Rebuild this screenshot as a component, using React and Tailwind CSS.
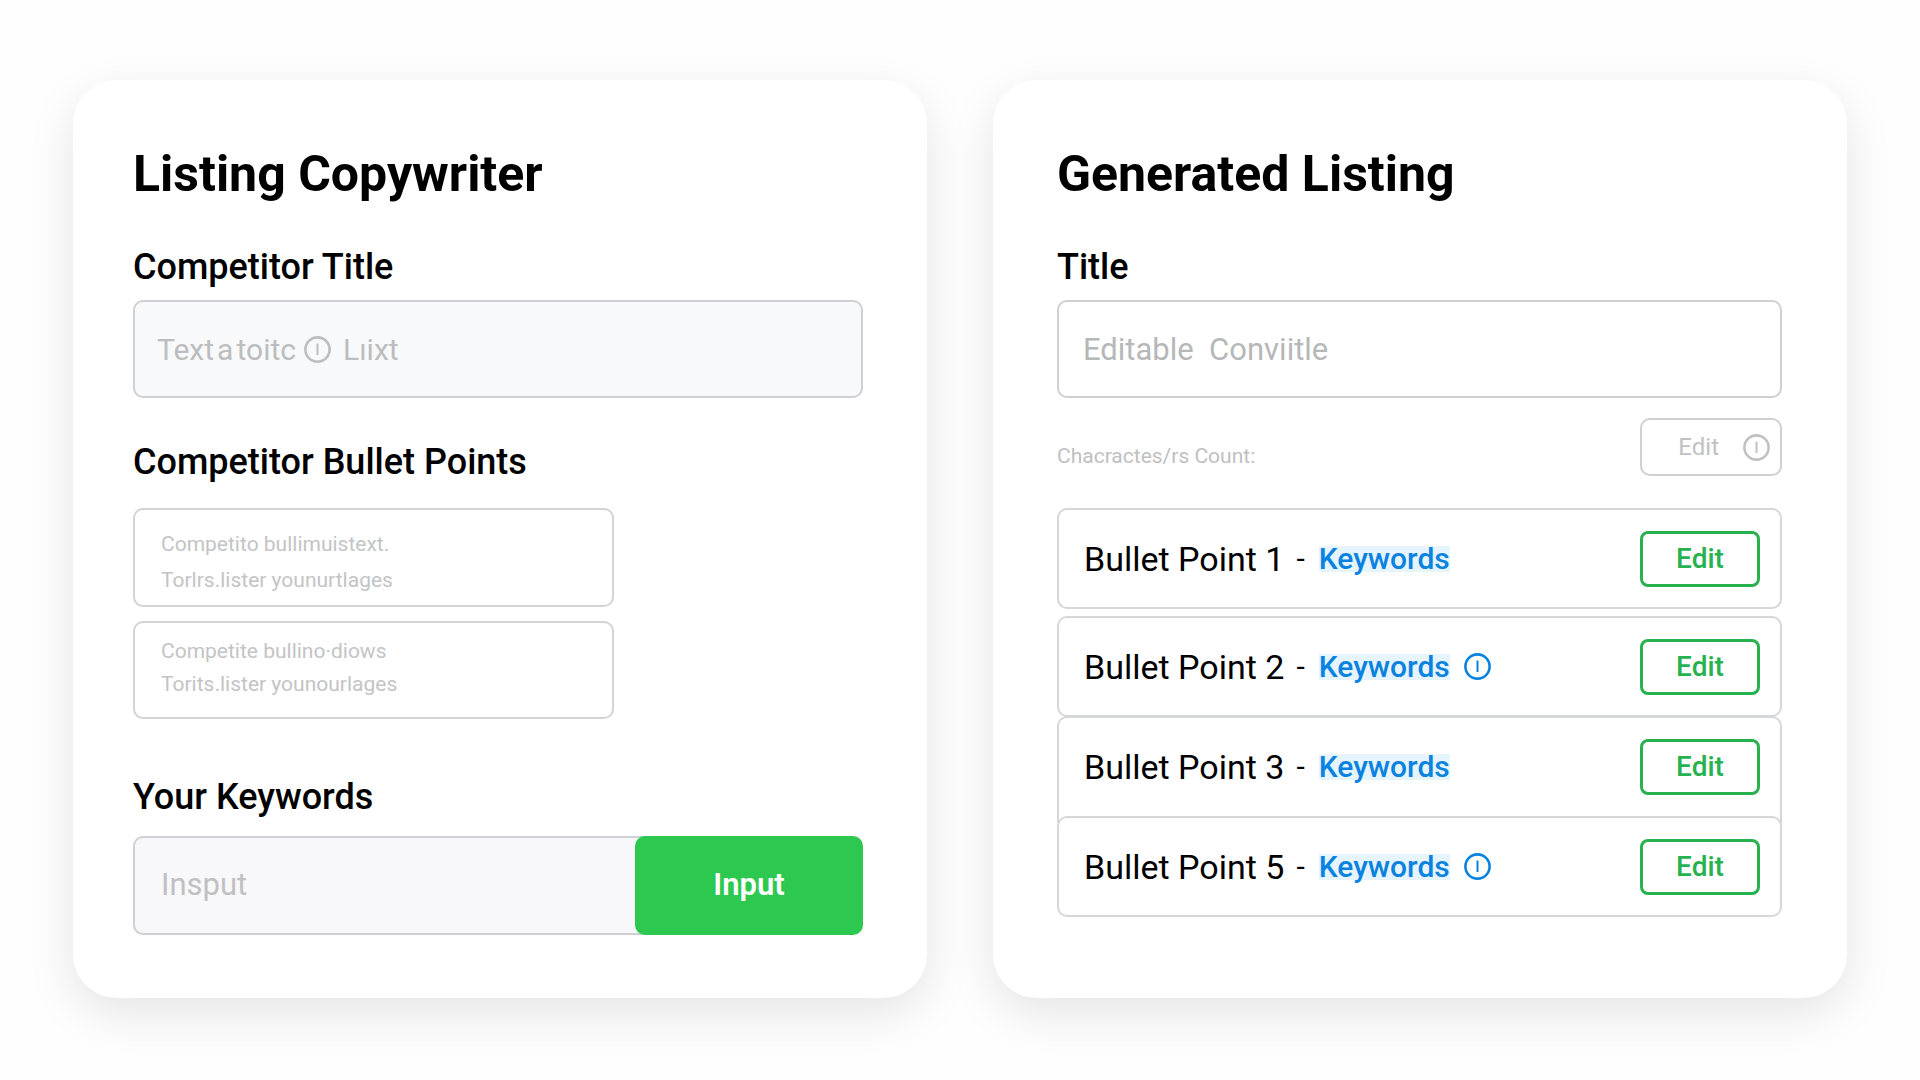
import React, { useState } from "react";

const bullets = [
  { id: 1, label: "Bullet Point 1", info: false, box: "h-[101px] rounded-[10px]" },
  { id: 2, label: "Bullet Point 2", info: true, box: "mt-[7px] h-[101px] rounded-[10px]" },
  // runs on underneath the last row, so it has no bottom edge
  { id: 3, label: "Bullet Point 3", info: false, box: "-mt-px h-[107px] rounded-t-[10px] border-b-0 pb-2" },
  { id: 5, label: "Bullet Point 5", info: true, box: "-mt-[7px] h-[101px] rounded-[10px]" },
];

const InfoIcon = ({ className }) => (
  <svg viewBox="0 0 27 27" fill="none" stroke="currentColor" className={className} aria-hidden="true">
    <circle cx="13.5" cy="13.5" r="12.1" strokeWidth="2.6" />
    <path d="M13.5 7.5v11.5" strokeWidth="2" />
  </svg>
);

const Card = ({ title, className, children }) => (
  <section className={`rounded-[44px] bg-white pt-16 pb-[63px] shadow-[0_16px_48px_rgba(0,0,0,0.1)] ${className}`}>
    <h1 className="text-[50px] leading-[60px] font-bold">{title}</h1>
    {children}
  </section>
);

const BulletRow = ({ label, info, box }) => (
  <li className={`flex items-center border-2 border-[#d6d7d8] bg-white pl-[25px] pr-5 ${box}`}>
    <span className="text-[34px] leading-10">{label}</span>
    <span className="ml-3 text-[30px] leading-10">-</span>
    <a href="#keywords" className="ml-3.5 flex h-[26px] items-center bg-[#e6f4fe] text-[30px] font-medium text-[#0a82e0]">
      Keywords
    </a>
    {info && <InfoIcon className="ml-3.5 size-[27px] text-[#0a82e0]" />}
    <button
      type="button"
      className="ml-auto h-14 w-[120px] rounded-lg border-3 border-[#27b14f] text-[28px] font-medium text-[#27b14f]"
    >
      Edit
    </button>
  </li>
);

const App = () => {
  const [competitor, setCompetitor] = useState("");
  const [keywords, setKeywords] = useState("");
  const [title, setTitle] = useState("");

  return (
    <main className="grid min-h-screen grid-cols-2 content-start gap-[66px] bg-[#fefefe] px-[73px] py-20 font-[Roboto,sans-serif] text-black">
      <Card title="Listing Copywriter" className="pr-16 pl-[60px]">
        <label htmlFor="competitor" className="mt-[42px] block text-[36px] leading-[42px] font-medium">
          Competitor Title
        </label>
        <div className="mt-3 flex h-[98px] items-center rounded-[10px] border-2 border-[#cfd0d2] bg-[#f8f9fa] px-[22px] text-[30px] text-[#bcbdbf]">
          <input
            id="competitor"
            value={competitor}
            onChange={(e) => setCompetitor(e.target.value)}
            placeholder={"Text\u200aa\u200atoitc"}
            className="w-[147px] outline-none placeholder:text-[#bcbdbf]"
          />
          <InfoIcon className="size-[27px] shrink-0" />
          <input
            aria-label="Text"
            placeholder="Lıixt"
            className="ml-3 min-w-0 flex-1 outline-none placeholder:text-[#bcbdbf]"
          />
        </div>

        <h2 className="mt-[43px] text-[36px] leading-[42px] font-medium">Competitor Bullet Points</h2>
        <textarea
          aria-label="Competitor bullet 1"
          defaultValue={"Competito bullimuistext.\nTorlrs.lister younurtlages"}
          className="mt-[25px] block h-[99px] w-[481px] resize-none overflow-hidden rounded-[10px] border-2 border-[#d2d3d4] px-[26px] pt-4 text-[21px] leading-9 text-[#c3c4c6] outline-none"
        />
        <textarea
          aria-label="Competitor bullet 2"
          defaultValue={"Competite bullino·diows\nTorits.lister younourlages"}
          className="mt-3.5 block h-[98px] w-[481px] resize-none overflow-hidden rounded-[10px] border-2 border-[#d2d3d4] px-[26px] pt-3 text-[21px] leading-[33px] text-[#c3c4c6] outline-none"
        />

        <label htmlFor="keywords" className="mt-[57px] block text-[36px] leading-[42px] font-medium">
          Your Keywords
        </label>
        <div className="mt-[18px] flex h-[99px] rounded-[10px] bg-[#f8f8fa]">
          <input
            id="keywords"
            value={keywords}
            onChange={(e) => setKeywords(e.target.value)}
            placeholder="Insput"
            className="-mr-3 min-w-0 flex-1 rounded-l-[10px] border-2 border-r-0 border-[#cfd0d2] px-[26px] text-[31px] outline-none placeholder:text-[#bfc0c2]"
          />
          <button type="button" className="w-[228px] rounded-[10px] bg-[#2dc84f] text-[31px] font-semibold text-white">
            Input
          </button>
        </div>
      </Card>

      <Card title="Generated Listing" className="pr-[65px] pl-16">
        <label htmlFor="title" className="mt-[42px] block text-[36px] leading-[42px] font-medium">
          Title
        </label>
        <input
          id="title"
          value={title}
          onChange={(e) => setTitle(e.target.value)}
          placeholder="Editable  Conviitle"
          className="mt-3 block h-[98px] w-full rounded-[10px] border-2 border-[#cfd0d2] px-6 text-[31px] outline-none placeholder:text-[#b6b7b9]"
        />

        <div className="mt-5 flex h-[58px] items-stretch justify-between">
          <p className="self-end pb-2 text-[21px] leading-6 text-[#bfc0c2]">Chacractes/rs Count:</p>
          <button
            type="button"
            className="flex w-[142px] items-center justify-end gap-6 rounded-[10px] border-2 border-[#cfd0d2] pr-2.5 text-[24px] text-[#c0c1c3]"
          >
            Edit
            <InfoIcon className="size-[27px]" />
          </button>
        </div>

        <ul className="mt-8">
          {bullets.map((b) => (
            <BulletRow key={b.id} label={b.label} info={b.info} box={b.box} />
          ))}
        </ul>
      </Card>
    </main>
  );
};

export default App;
